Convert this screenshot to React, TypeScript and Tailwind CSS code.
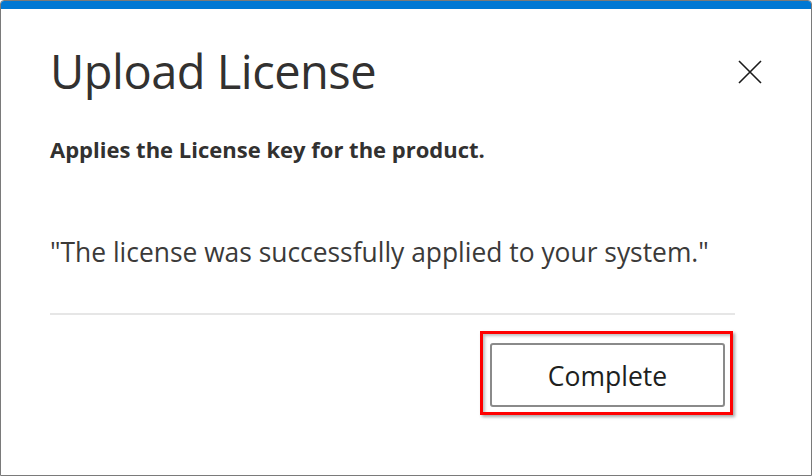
import React from "react";

export default function App() {
  return (
    <div className="w-[812px] h-[476px] bg-white overflow-hidden" style={{ fontFamily: '"Open Sans", "Noto Sans", sans-serif' }}>
      <div className="w-full h-full border border-[#7a7a7a] rounded-t-[4px] flex flex-col">
        <div className="h-[8px] bg-[#0078d4] rounded-t-[3px]" />
        <div className="flex-1 flex flex-col pl-[49px] pr-[76px] relative">
          <h1 className="mt-[30px] text-[47px] leading-[64px] text-[#323130] font-normal tracking-[-0.5px]">Upload License</h1>
          <button className="absolute right-[49px] top-[51px] w-[24px] h-[24px] flex items-center justify-center">
            <svg width="24" height="24" viewBox="0 0 24 24">
              <path d="M1 1 L23 23 M23 1 L1 23" stroke="#1a1a1a" strokeWidth="1.6" />
            </svg>
          </button>
          <p className="mt-[31px] text-[22px] leading-[30px] font-bold text-[#323130]">Applies the License key for the product.</p>
          <p className="mt-[70px] text-[26.4px] leading-[36px] text-[#3b3a39]">"The license was successfully applied to your system."</p>
          <div className="mt-[43px] h-[2px] bg-[#e6e6e6]" />
          <div className="flex justify-end mt-[16px] mr-[2px]">
            <div className="border-[3px] border-[#ff0000] pt-[9px] pl-[7px] pr-[5px] pb-[5px] shadow-[2px_2px_3px_rgba(0,0,0,0.35),inset_2px_2px_3px_rgba(0,0,0,0.25)]">
              <button className="w-[235px] h-[64px] border-2 border-[#8a8a8a] rounded-[3px] bg-white text-[26.5px] leading-[36px] text-[#201f1e] pt-[2px]">Complete</button>
            </div>
          </div>
        </div>
      </div>
    </div>
  );
}
